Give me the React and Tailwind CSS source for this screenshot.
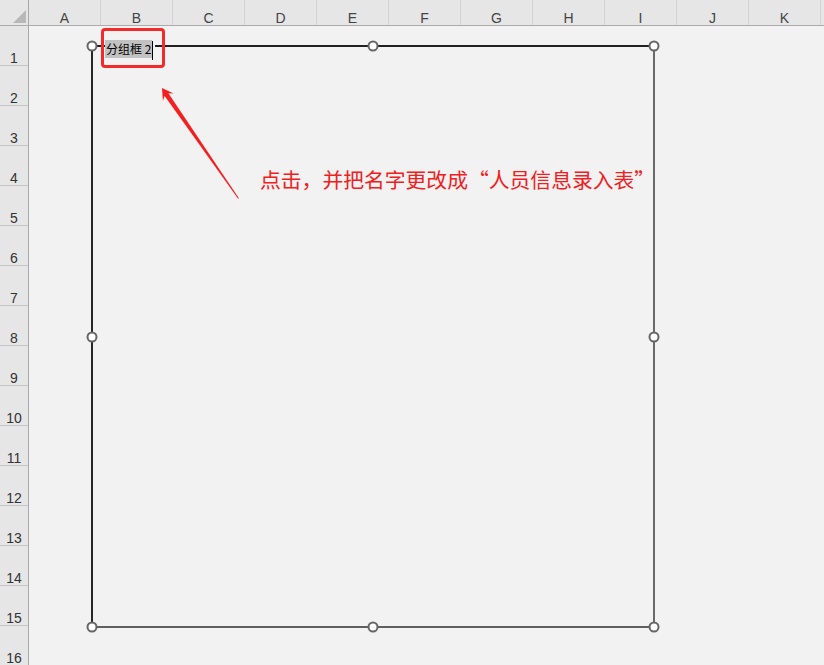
const cols = ['A', 'B', 'C', 'D', 'E', 'F', 'G', 'H', 'I', 'J', 'K'];
const rows = Array.from({ length: 16 }, (_, i) => i + 1);

const handles = [
  [92, 46], [373, 46], [654, 46],
  [92, 337], [654, 337],
  [92, 627], [373, 627], [654, 627],
];

export default function App() {
  return (
    <div className="relative w-[824px] h-[665px] overflow-hidden bg-[#f2f2f2] font-['Liberation_Sans',sans-serif]">
      {/* column header */}
      <div className="flex h-[26px] bg-[#e6e6e6] border-b border-[#ababab]">
        <div className="flex items-end justify-end w-[29px] shrink-0 border-r border-[#a8a8a8] pr-[1px] pb-[1px]">
          <svg width="14" height="14" viewBox="0 0 14 14">
            <polygon points="13,0 13,13 0,13" fill="#b8b8b8" />
          </svg>
        </div>
        {cols.map((c) => (
          <div
            key={c}
            className="w-[72px] shrink-0 flex items-end justify-center border-r border-[#d2d2d2] text-[14px] leading-none text-[#444]"
          >
            {c}
          </div>
        ))}
      </div>

      {/* body */}
      <div className="flex">
        <div className="w-[29px] shrink-0 bg-[#e6e6e6] border-r border-[#a8a8a8]">
          {rows.map((r) => (
            <div
              key={r}
              className="h-[40px] border-b border-[#c6c6c6] flex items-end justify-center text-[14px] leading-none text-[#333]"
            >
              {r}
            </div>
          ))}
        </div>
        <div className="flex-1" />
      </div>

      {/* group box shape on the sheet canvas */}
      <div className="absolute left-[91px] top-[45px] w-[564px] h-[583px] border-t-2 border-l-2 border-t-[#202020] border-l-[#262626] border-r-2 border-b-2 border-r-[#6a6a6a] border-b-[#5f5f5f]">
        <div className="absolute left-[12px] top-[-7px] flex items-start bg-[#f2f2f2] pr-[2px]">
          <span className="h-[18px] px-[1px] bg-[#c2c2c2] text-[12px] leading-[18px] text-black font-['Noto_Sans_CJK_SC',sans-serif] whitespace-nowrap">
            分组框 2
          </span>
          <span className="mt-[1px] w-[1px] h-[19px] bg-black" />
        </div>
      </div>

      {/* handles + arrow */}
      <svg className="absolute left-0 top-0 pointer-events-none" width="824" height="665">
        {handles.map(([x, y]) => (
          <circle key={`${x}-${y}`} cx={x} cy={y} r="4.5" fill="#ffffff" stroke="#666666" strokeWidth="2" />
        ))}
        <polygon
          points="162,88 173.6,93.4 168.4,93.3 238.9,198.2 238.1,198.8 164.65,95.9 162.9,100.7"
          fill="#f42020"
        />
      </svg>

      {/* red highlight box */}
      <div className="absolute left-[101px] top-[28px] w-[64px] h-[40px] border-[3px] border-[#f42a2a] rounded-[4px]" />

      {/* annotation text */}
      <div className="absolute left-[260px] top-[168px] text-[20.8px] leading-[22px] text-[#f0201e] font-['Noto_Sans_CJK_SC',sans-serif] whitespace-nowrap">
        点击，并把名字更改成“人员信息录入表”
      </div>
    </div>
  );
}
